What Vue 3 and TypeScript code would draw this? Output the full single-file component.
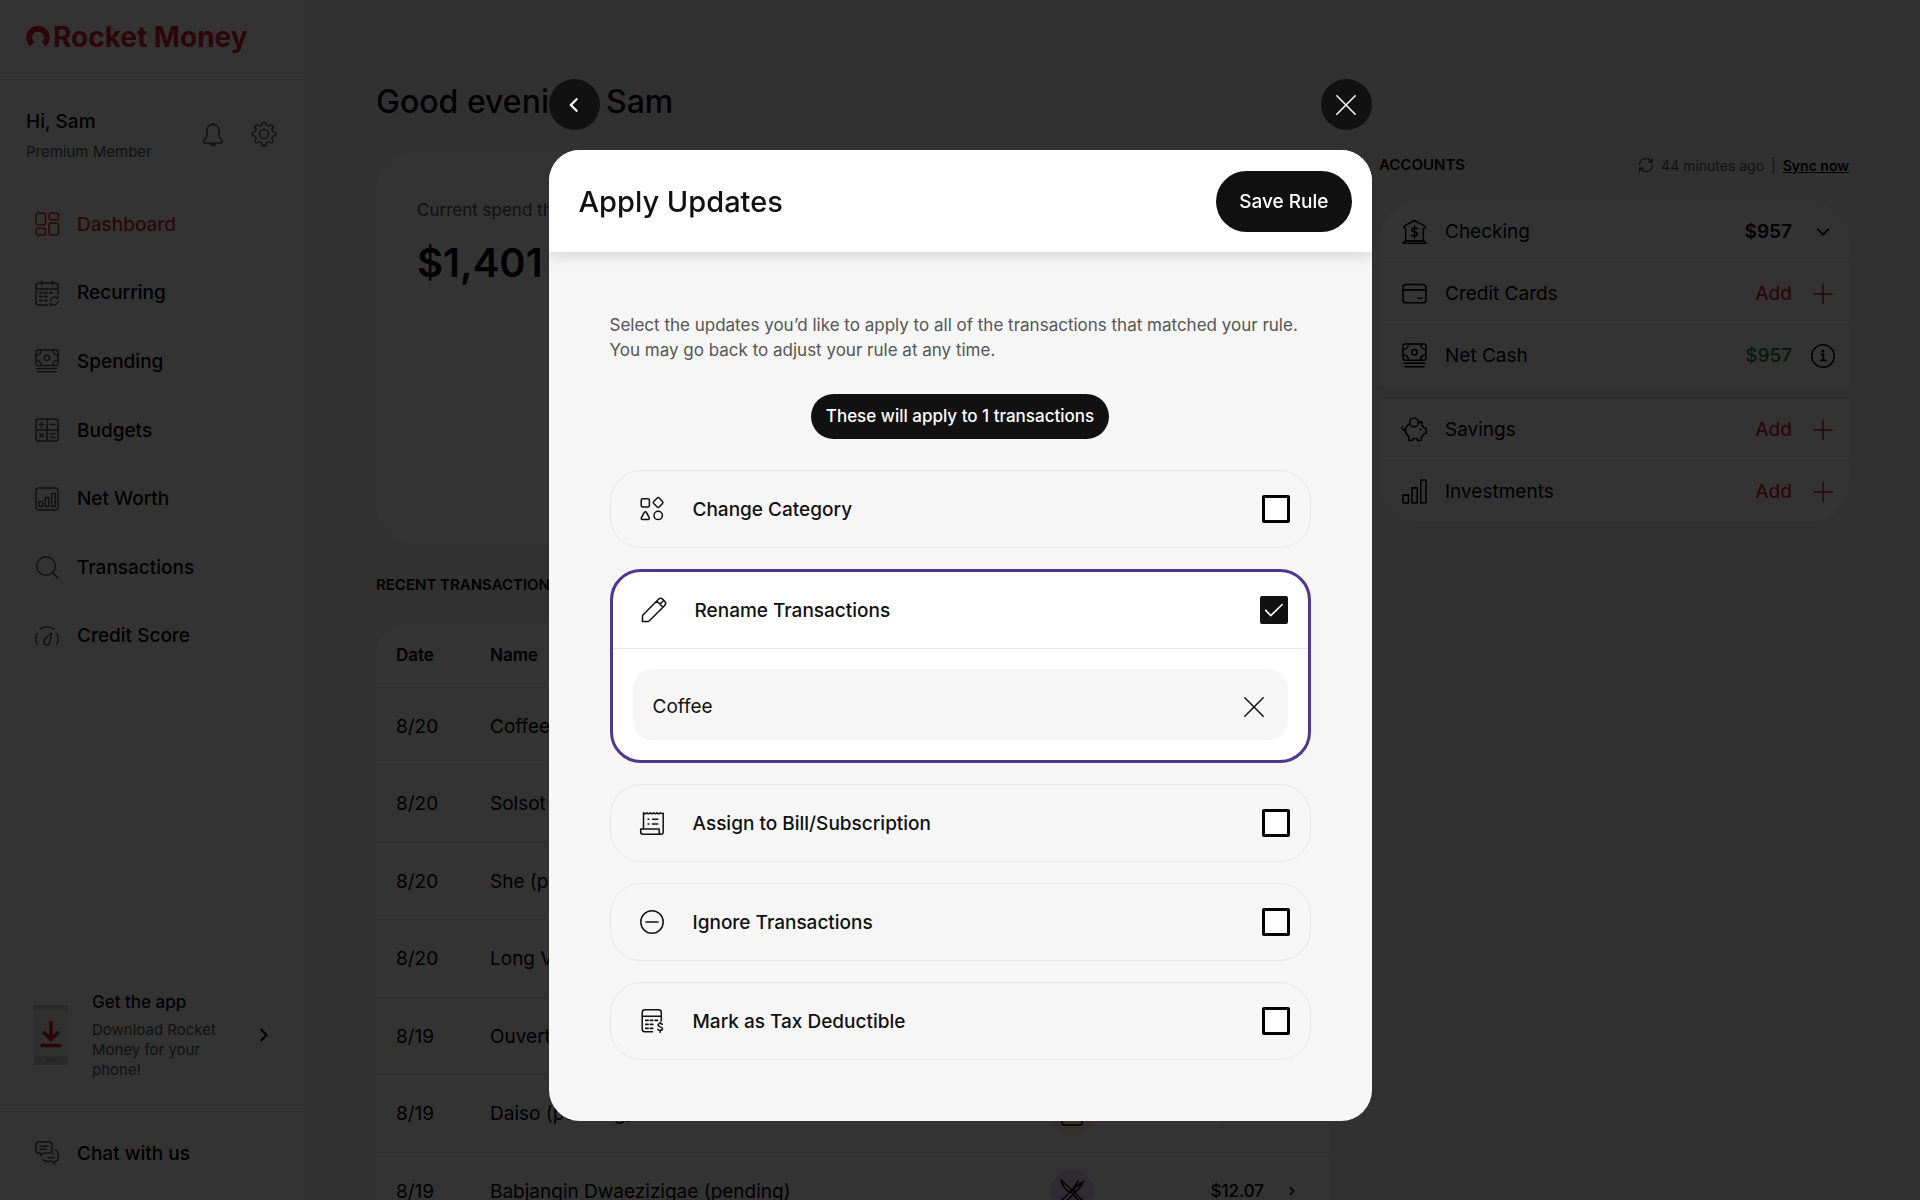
<script setup lang="ts">
import { ref } from 'vue'

interface NavItem { label: string; icon: string; active?: boolean }
interface Account { label: string; icon: string; value: string; kind: 'open' | 'add' | 'info' }
interface Transaction { date: string; name: string; amount: string; tone: string; icon: string }
interface RuleOption { id: string; label: string; icon: string; checked: boolean; field?: boolean }

function gearOutline(): string {
  const points: string[] = []
  for (let i = 0; i < 144; i++) {
    const a = (i / 144) * Math.PI * 2
    const r = 10.3 + 1.4 * Math.tanh(2.2 * Math.cos(8 * a))
    points.push(`${(12 + r * Math.cos(a)).toFixed(2)} ${(12 + r * Math.sin(a)).toFixed(2)}`)
  }
  return `M${points.join('L')}Z`
}

const banknote =
  '<rect x="1" y="1" width="22" height="15.5" rx="2"/><circle cx="12" cy="8.8" r="2.6"/><path d="M1 6.2A5 5 0 0 0 6.2 1M17.8 1A5 5 0 0 0 23 6.2M1 11.3a5 5 0 0 1 5.2 5.2M17.8 16.5a5 5 0 0 1 5.2-5.2M2 19.5h20M3 22.8h18"/>'

const icons: Record<string, string> = {
  bell: '<path d="M12 2.6C8 2.6 5.8 5.6 5.8 9.5v4.5c0 2-3.2 4-3.2 5.8 0 .7.5 1.1 1.2 1.1h16.4c.7 0 1.2-.4 1.2-1.1 0-1.8-3.2-3.8-3.2-5.8V9.5C18.2 5.6 16 2.6 12 2.6ZM10.3 2.6a1.8 1.8 0 0 1 3.4 0M9.8 21.2a2.2 2.2 0 0 0 4.4 0"/>',
  gear: `<path d="${gearOutline()}"/><circle cx="12" cy="12" r="4.6"/>`,
  dashboard: '<rect x="1" y="1" width="9.5" height="12" rx="2.3"/><rect x="14" y="1" width="9.5" height="6.8" rx="2.3"/><rect x="1" y="16.2" width="9.5" height="6.8" rx="2.3"/><rect x="14" y="11" width="9.5" height="12" rx="2.3"/>',
  recurring: '<path d="M12 24H4a3 3 0 0 1-3-3V5a3 3 0 0 1 3-3h16a3 3 0 0 1 3 3v8M1 8h22M6.5 0v4M17.5 0v4M15.5 19.5a4 4 0 0 1 7-2l.5-2M23 20.5a4 4 0 0 1-7 2l-.5 2"/><path d="M4.8 11.8h2M9.8 11.8h2M14.8 11.8h2M4.8 15.6h2M9.8 15.6h2M4.8 19.4h2M9.8 19.4h2" stroke-width="2"/>',
  spending: banknote,
  budgets: '<rect x="1" y="1" width="22" height="22" rx="2.5"/><path d="M12 1v22M1 12h22M4.2 6.6h4.6M6.5 4.3v4.6M15.2 6.6h4.8M4.8 15.6l3.4 3.4M8.2 15.6l-3.4 3.4M15.2 15.8h4.8M15.2 19.2h4.8"/>',
  networth: '<rect x="1" y="1" width="22" height="22" rx="2.5"/><path d="M4 14.5h3.6v5H4zM10.2 10.5h3.6v9h-3.6zM16.6 6.5h3.6v13h-3.6z"/>',
  search: '<circle cx="11" cy="11" r="9.3"/><path d="M17.6 17.6l5 5"/>',
  score: '<path d="M2.2 20A11.2 11.2 0 0 1 2.2 9.5M5 5.2a11.5 11.5 0 0 1 14 0M21.8 9.5a11.2 11.2 0 0 1 0 10.5M16.5 9c-4 3-7.8 6.5-7.8 9.2a3 3 0 0 0 5.9.5C15.2 16 16 13 16.5 9Z"/>',
  chat: '<path d="M3.8 1h10.4A2.8 2.8 0 0 1 17 3.8v5.4a2.8 2.8 0 0 1-2.8 2.8H8.5L5.5 15v-3H3.8A2.8 2.8 0 0 1 1 9.2V3.8A2.8 2.8 0 0 1 3.8 1ZM5 5h8M5 8.3h6M20 9.3c1.7 0 3 1 3 2.8v5.2c0 1.7-1.3 2.9-3 2.9h-.3V23l-3.2-2.8H10.5c-1.2 0-2.2-.8-2.6-2M18 13.2h1M13 16.7h6"/>',
  bank: '<path d="M2 8.5V6.8L12 1.5l10 5.3v1.7l-1.5.5v12h-17V9zM.8 23.2L3.2 21h17.6l2.4 2.2zM14.6 9.3c-.6-1-5.2-1.3-5.2 1.1 0 2.5 5.4 1.4 5.4 4.1 0 2.5-5 2.3-5.6.8M12 7v11.2"/>',
  card: '<rect x="1" y="3.3" width="22" height="17.6" rx="3"/><path d="M1 8.5h22M15.5 16.5h3.5"/>',
  cash: banknote,
  pig: '<circle cx="11.5" cy="5.2" r="4.2"/><path d="M7.6 6.8C4.5 8 3.3 10.3 3.3 13c0 2.6 1.2 4.3 3 5.7l.5 3.8h3.4l.5-1.8h3.8l.5 1.8h3.2l.6-3.6c1-.6 1.7-1.5 2.1-2.5l2.3-.9v-4.5l-2.3-.8c-.4-1.1-1.1-2-2-2.7l.3-3.3c-1.6.2-2.8 1-3.5 2M3.3 13C1 13.3 0 11 .3 9.3M17.8 11.5v.6"/>',
  bars: '<path d="M1 15.5h5.2v7.5H1zM9.6 8.5h5v14.5h-5zM18 1h5v22h-5z"/>',
  sync: '<path d="M2.3 12A9.7 9.7 0 0 1 20 6.6M21.7 12A9.7 9.7 0 0 1 4 17.4M21.5 2v5.5H16M2.5 22v-5.5H8"/>',
  plus: '<path d="M12 2.8v18.4M2.8 12h18.4"/>',
  chevronDown: '<path d="M6.8 9.4l5.2 5.2 5.2-5.2" stroke-width="2"/>',
  chevronRight: '<path d="M9.4 6.8l5.2 5.2-5.2 5.2" stroke-width="2.3"/>',
  info: '<circle cx="12" cy="12" r="11.2"/><path d="M10.3 10.3H12.3V16M9.8 16.4h5" stroke-width="1.8"/><circle cx="12" cy="7" r=".8" fill="currentColor"/>',
  close: '<path d="M2.8 2.8l18.4 18.4M21.2 2.8L2.8 21.2"/>',
  back: '<path d="M14.6 6.2L8.8 12l5.8 5.8" stroke-width="2.3"/>',
  shapes: '<rect x="1.2" y="1.8" width="8.2" height="8.2" rx="1.5"/><path d="M17.2.9a1.3 1.3 0 0 1 1.9 0l3.4 3.6a1.3 1.3 0 0 1 0 1.9l-3.4 3.6a1.3 1.3 0 0 1-1.9 0l-3.5-3.6a1.3 1.3 0 0 1 0-1.9zM4.3 15.3a1.2 1.2 0 0 1 2.1 0l2.8 5.4a1.1 1.1 0 0 1-1 1.7H2.4a1.1 1.1 0 0 1-1-1.7z"/><circle cx="18.2" cy="18.4" r="4.2"/>',
  pencil: '<path d="M.4 23.6l.2-5.6a2 2 0 0 1 .6-1.3L16.5 1.3a3 3 0 0 1 4.2 0l2 2a3 3 0 0 1 0 4.2L7.4 22.8a2 2 0 0 1-1.3.6zM14.8 3l6.2 6.2M17.9 6.1l3.3-3.1"/>',
  receipt: '<path d="M3.5 18V1.8c1 1.2 2.3 1.2 3.3 0 1 1.2 2.4 1.2 3.4 0 1 1.2 2.4 1.2 3.4 0 1 1.2 2.4 1.2 3.4 0 1 1.2 2.4 1.2 3.4 0 1 1 1.7 1.1 2.8.4V21a2.3 2.3 0 0 1-2.3 2.3H3a2.5 2.5 0 0 1-2.3-2.6V18h18.5v3c0 1.3.7 2.3 1.9 2.3M8 8.3h.9M12.5 8.3h5.3M8 13h.9M12.5 13h5.3"/>',
  minus: '<circle cx="12" cy="12" r="11.2"/><path d="M6 12h12"/>',
  tax: '<path d="M12.5 22.8H5A2.8 2.8 0 0 1 2.2 20V3.5A2.8 2.8 0 0 1 5 .8h13.5a2.8 2.8 0 0 1 2.8 2.7V12M2.2 7.3h19.1M22.3 15.3c-.7-.9-4.3-1.2-4.3.8 0 2.2 4.5 1.3 4.5 3.6 0 2.1-4 1.9-4.7.6M20.2 13.2v1M20.2 21.5v2"/><path d="M5.8 11.3h2.3M10.4 11.3h2.3M15.2 11.3h2.3M5.8 15.3h2.3M10.4 15.3h2.3M5.8 19.3h2.3M10.4 19.3h2.3" stroke-width="1.8"/>',
  bag: '<rect x="2" y="5" width="20" height="18" rx="2"/><path d="M7 9V5a5 5 0 0 1 10 0v4"/>',
  dining: '<path d="M1 1c1 5 4 9 8 12l3-2L1 1ZM12 11l11 11c-1 2-3 2-4 0l-8-9M1 22l12-12 3 3L4 24M13 10l5-8M22 6l-6 7M20 4l-5 5M24 2l-5 5"/>',
}

const nav: NavItem[] = [
  { label: 'Dashboard', icon: 'dashboard', active: true },
  { label: 'Recurring', icon: 'recurring' },
  { label: 'Spending', icon: 'spending' },
  { label: 'Budgets', icon: 'budgets' },
  { label: 'Net Worth', icon: 'networth' },
  { label: 'Transactions', icon: 'search' },
  { label: 'Credit Score', icon: 'score' },
]

const accountGroups: Account[][] = [
  [
    { label: 'Checking', icon: 'bank', value: '$957', kind: 'open' },
    { label: 'Credit Cards', icon: 'card', value: 'Add', kind: 'add' },
    { label: 'Net Cash', icon: 'cash', value: '$957', kind: 'info' },
  ],
  [
    { label: 'Savings', icon: 'pig', value: 'Add', kind: 'add' },
    { label: 'Investments', icon: 'bars', value: 'Add', kind: 'add' },
  ],
]
const trailing = { open: 'chevronDown', add: 'plus', info: 'info' }

const transactions: Transaction[] = [
  { date: '8/20', name: 'Coffee', amount: '$5.50', tone: 'lilac', icon: 'dining' },
  { date: '8/20', name: 'Solsot', amount: '$9.20', tone: 'lilac', icon: 'dining' },
  { date: '8/20', name: 'She (pending)', amount: '$8.75', tone: 'sand', icon: 'bag' },
  { date: '8/20', name: 'Long V', amount: '$7.30', tone: 'lilac', icon: 'dining' },
  { date: '8/19', name: 'Ouvert', amount: '$6.10', tone: 'lilac', icon: 'dining' },
  { date: '8/19', name: 'Daiso (pending)', amount: '$3.76', tone: 'sand', icon: 'bag' },
  { date: '8/19', name: 'Babjangin Dwaezizigae (pending)', amount: '$12.07', tone: 'lilac', icon: 'dining' },
]

const options = ref<RuleOption[]>([
  { id: 'category', label: 'Change Category', icon: 'shapes', checked: false },
  { id: 'rename', label: 'Rename Transactions', icon: 'pencil', checked: true, field: true },
  { id: 'bill', label: 'Assign to Bill/Subscription', icon: 'receipt', checked: false },
  { id: 'ignore', label: 'Ignore Transactions', icon: 'minus', checked: false },
  { id: 'tax', label: 'Mark as Tax Deductible', icon: 'tax', checked: false },
])
const newName = ref('Coffee')
</script>

<template>
  <div class="app">
    <aside class="sidebar">
      <div class="brand">
        <svg class="brand-mark" viewBox="0 0 24 24" aria-hidden="true">
          <path d="M6.2 19.2A8.8 8.8 0 1 1 17.8 19.2" />
        </svg>
        <span class="brand-name">Rocket Money</span>
      </div>

      <div class="user">
        <div class="user-text">
          <div class="user-name">Hi, Sam</div>
          <div class="user-plan">Premium Member</div>
        </div>
        <button class="plain" type="button" aria-label="Notifications">
          <svg class="icon" viewBox="0 0 24 24" v-html="icons.bell"></svg>
        </button>
        <button class="plain" type="button" aria-label="Settings">
          <svg class="icon" viewBox="0 0 24 24" v-html="icons.gear"></svg>
        </button>
      </div>

      <nav class="nav">
        <a v-for="item in nav" :key="item.label" href="#" class="nav-link" :class="{ active: item.active }">
          <svg class="icon" viewBox="0 0 24 24" v-html="icons[item.icon]"></svg>
          <span>{{ item.label }}</span>
        </a>
      </nav>

      <a href="#" class="get-app">
        <svg class="phone" viewBox="0 0 34 60" aria-hidden="true">
          <rect width="34" height="60" fill="#f0f0f0" />
          <rect width="34" height="5" fill="#d2d2d2" />
          <rect y="51" width="34" height="9" fill="#d2d2d2" />
          <rect x="11" y="53" width="12" height="4" rx="2" fill="#b8b8b8" />
          <path d="M17 16v18M9.5 27l7.5 7.5 7.5-7.5M6.5 40.5h21" fill="none" stroke="#de1f3e" stroke-width="3.6" />
        </svg>
        <span class="get-app-text">
          <strong>Get the app</strong>
          <span>Download Rocket Money for your phone!</span>
        </span>
        <svg class="icon" viewBox="0 0 24 24" v-html="icons.chevronRight"></svg>
      </a>

      <a href="#" class="chat">
        <svg class="icon" viewBox="0 0 24 24" v-html="icons.chat"></svg>
        <span>Chat with us</span>
      </a>
    </aside>

    <main class="main">
      <h1>Good evening, Sam</h1>
      <div class="columns">
        <div class="left">
          <section class="spend card">
            <div class="spend-label">Current spend this month</div>
            <div class="spend-value">$1,401</div>
          </section>
          <h2 class="recent-title">RECENT TRANSACTIONS</h2>
          <div class="card table-card">
            <table>
              <thead>
                <tr>
                  <th class="col-date">Date</th>
                  <th>Name</th>
                  <th class="col-cat">Category</th>
                  <th class="col-amount">Amount</th>
                  <th class="col-more"></th>
                </tr>
              </thead>
              <tbody>
                <tr v-for="(t, i) in transactions" :key="i">
                  <td class="col-date">{{ t.date }}</td>
                  <td>{{ t.name }}</td>
                  <td class="col-cat">
                    <span class="badge" :class="t.tone">
                      <svg class="icon" viewBox="0 0 24 24" v-html="icons[t.icon]"></svg>
                    </span>
                  </td>
                  <td class="col-amount">{{ t.amount }}</td>
                  <td class="col-more">
                    <svg class="icon small" viewBox="0 0 24 24" v-html="icons.chevronRight"></svg>
                  </td>
                </tr>
              </tbody>
            </table>
          </div>
        </div>

        <section class="accounts">
          <div class="accounts-head">
            <h2>ACCOUNTS</h2>
            <span class="sync">
              <svg class="icon sync-icon" viewBox="0 0 24 24" v-html="icons.sync"></svg>
              <span>44 minutes ago</span>
              <span>|</span>
              <a href="#">Sync now</a>
            </span>
          </div>
          <div class="groups">
            <ul v-for="(group, g) in accountGroups" :key="g" class="group">
              <li v-for="a in group" :key="a.label" :class="a.kind">
                <svg class="icon lead" viewBox="0 0 24 24" v-html="icons[a.icon]"></svg>
                <span class="account-name">{{ a.label }}</span>
                <span class="account-value">{{ a.value }}</span>
                <svg class="icon" viewBox="0 0 24 24" v-html="icons[trailing[a.kind]]"></svg>
              </li>
            </ul>
          </div>
        </section>
      </div>
    </main>

    <div class="overlay">
      <div class="dialog-wrap">
        <div class="dialog-nav">
          <button type="button" class="round" aria-label="Back">
            <svg class="icon" viewBox="0 0 24 24" v-html="icons.back"></svg>
          </button>
          <button type="button" class="round" aria-label="Close">
            <svg class="icon" viewBox="0 0 24 24" v-html="icons.close"></svg>
          </button>
        </div>
        <div class="dialog" role="dialog" aria-modal="true" aria-labelledby="dialog-title">
          <header class="dialog-head">
            <h2 id="dialog-title">Apply Updates</h2>
            <button type="button" class="save">Save Rule</button>
          </header>
          <div class="dialog-body">
            <p class="intro">
              Select the updates you’d like to apply to all of the transactions that matched your rule.<br />
              You may go back to adjust your rule at any time.
            </p>
            <div class="pill">These will apply to 1 transactions</div>
            <div class="options">
              <div v-for="o in options" :key="o.id" class="option" :class="{ selected: o.checked }">
                <label class="option-row" :for="o.id">
                  <svg class="icon" viewBox="0 0 24 24" v-html="icons[o.icon]"></svg>
                  <span>{{ o.label }}</span>
                  <input :id="o.id" v-model="o.checked" type="checkbox" />
                </label>
                <div v-if="o.field && o.checked" class="option-body">
                  <div class="field">
                    <input v-model="newName" type="text" aria-label="New name" />
                    <button type="button" class="plain" aria-label="Clear name" @click="newName = ''">
                      <svg class="icon" viewBox="0 0 24 24" v-html="icons.close"></svg>
                    </button>
                  </div>
                </div>
              </div>
            </div>
          </div>
        </div>
      </div>
    </div>
  </div>
</template>

<style>
body {
  margin: 0;
}
</style>

<style scoped>
* {
  box-sizing: border-box;
}
.app {
  display: flex;
  height: 100vh;
  overflow: hidden;
  background: #f6f6f6;
  color: #000;
  font-family: Inter, 'Liberation Sans', sans-serif;
  font-size: 19px;
}
h1,
h2,
p,
ul {
  margin: 0;
  padding: 0;
  font-weight: 500;
}
a {
  color: inherit;
  text-decoration: none;
}
button {
  border: 0;
  font: inherit;
  cursor: pointer;
}
.plain {
  display: flex;
  padding: 0;
  background: none;
  color: inherit;
}
.icon {
  width: 24px;
  height: 24px;
  flex: none;
  overflow: visible;
  fill: none;
  stroke: currentColor;
  stroke-width: 1.5;
  stroke-linecap: round;
  stroke-linejoin: round;
}

/* Sidebar */
.sidebar {
  display: flex;
  flex-direction: column;
  width: 304px;
  flex: none;
  background: #fff;
  font-weight: 500;
}
.brand {
  display: flex;
  align-items: center;
  gap: 3px;
  height: 80px;
  padding: 0 26px 6px;
  border-bottom: 1px solid #dcdcdc;
  color: #de1f3e;
}
.brand-mark {
  width: 24px;
  height: 24px;
  fill: none;
  stroke: currentColor;
  stroke-width: 6;
}
.brand-name {
  font-size: 28px;
  font-weight: 700;
  white-space: nowrap;
}
.user {
  display: flex;
  align-items: center;
  gap: 27px;
  height: 110px;
  padding: 0 28px 3px 26px;
  color: #555;
}
.user-text {
  flex: 1;
  padding-top: 4px;
}
.user-name {
  color: #000;
  line-height: 26px;
}
.user-plan {
  margin-top: 7px;
  font-size: 15px;
  font-weight: 400;
  line-height: 20px;
}
.nav {
  display: flex;
  flex-direction: column;
  height: 480px;
}
.nav-link {
  display: flex;
  flex: 1;
  align-items: center;
  gap: 18px;
  padding-left: 35px;
}
.nav-link .icon,
.chat .icon {
  color: #555;
}
.nav-link.active,
.nav-link.active .icon {
  color: #de1f3e;
}
.get-app {
  display: flex;
  align-items: center;
  gap: 24px;
  margin-top: auto;
  padding: 0 28px 31px 34px;
}
.phone {
  width: 34px;
  height: 60px;
  flex: none;
}
.get-app-text {
  flex: 1;
  color: #555;
  font-size: 15px;
  font-weight: 400;
  line-height: 20px;
}
.get-app-text strong {
  display: block;
  margin-bottom: 6px;
  color: #000;
  font-size: 17px;
  font-weight: 500;
  line-height: 24px;
}
.chat {
  display: flex;
  align-items: center;
  gap: 18px;
  height: 89px;
  padding: 0 35px 6px;
  border-top: 1px solid #dcdcdc;
}

/* Dashboard */
.main {
  flex: 1;
  min-width: 0;
  padding: 80px 71px 0 72px;
}
h1 {
  margin-bottom: 27px;
  font-size: 32px;
  line-height: 44px;
}
.columns {
  display: flex;
  align-items: flex-start;
  gap: 50px;
}
.left {
  flex: 1;
  min-width: 0;
}
.card {
  border-radius: 40px;
  background: #fcfcfc;
}
.spend {
  height: 394px;
  padding: 47px 41px;
}
.spend-label {
  color: #555;
  font-size: 17px;
  line-height: 24px;
}
.spend-value {
  margin-top: 11px;
  font-size: 40px;
  font-weight: 600;
  line-height: 60px;
}
.recent-title,
.accounts-head h2 {
  font-size: 15px;
  font-weight: 600;
  line-height: 20px;
}
.recent-title {
  margin: 30px 0 27px;
}
.table-card {
  border-radius: 32px 32px 0 0;
}
table {
  width: 100%;
  border-spacing: 0;
  table-layout: fixed;
}
th,
td {
  padding: 0;
  height: 77px;
  border-bottom: 1px solid #e8e8e8;
  text-align: left;
  font-weight: 400;
}
tr:nth-child(even) td {
  height: 78px;
}
th {
  height: 66px;
  font-size: 17px;
  font-weight: 600;
}
.col-date {
  width: 114px;
  padding-left: 20px;
}
.col-cat {
  width: 132px;
  text-align: center;
}
.col-amount {
  width: 126px;
  font-size: 17px;
  font-weight: 500;
  text-align: right;
}
.col-more {
  width: 65px;
  padding-left: 20px;
}
.icon.small {
  display: block;
  width: 16px;
  height: 16px;
  stroke-width: 2;
}
.badge {
  display: inline-flex;
  align-items: center;
  justify-content: center;
  width: 44px;
  height: 44px;
  border-radius: 50%;
  vertical-align: middle;
}
.badge.lilac {
  background: #e6dcfa;
}
.badge.sand {
  background: #faf0d2;
}

/* Accounts */
.accounts {
  width: 470px;
  flex: none;
}
.accounts-head {
  display: flex;
  align-items: center;
  justify-content: space-between;
  height: 28px;
  margin-bottom: 22px;
}
.sync {
  display: flex;
  align-items: center;
  gap: 7px;
  color: #555;
  font-size: 14px;
}
.sync a {
  color: #000;
  font-weight: 600;
  text-decoration: underline;
}
.sync-icon {
  width: 16px;
  height: 16px;
  stroke-width: 2;
}
.groups {
  overflow: hidden;
  border-radius: 40px;
  background: #f0f0f0;
}
.group {
  background: #fcfcfc;
  list-style: none;
}
.group + .group {
  margin-top: 12px;
}
.group li {
  display: flex;
  align-items: center;
  height: 62px;
  padding: 0 14px 0 23px;
  border-bottom: 1px solid #e8e8e8;
  font-weight: 400;
}
.group .lead {
  width: 25px;
  height: 25px;
  margin-right: 18px;
}
.account-name {
  flex: 1;
}
.account-value {
  margin-right: 19px;
  font-weight: 500;
}
.add .account-value,
.add .account-value + .icon {
  color: #de1f3e;
}
.open .account-value {
  font-weight: 600;
}
.info .account-value {
  color: #17804a;
}

/* Dialog */
.overlay {
  position: fixed;
  inset: 0;
  display: flex;
  align-items: center;
  justify-content: center;
  background: rgba(0, 0, 0, 0.8);
  color: #111;
  font-weight: 500;
}
.dialog-wrap {
  width: 823px;
}
.dialog-nav {
  display: flex;
  justify-content: space-between;
  margin-bottom: 20px;
}
.round {
  display: flex;
  align-items: center;
  justify-content: center;
  width: 51px;
  height: 51px;
  padding: 0;
  border-radius: 50%;
  background: #111;
  color: #fff;
}
.dialog {
  overflow: hidden;
  border-radius: 31px;
  background: #f6f6f6;
}
.dialog-head {
  position: relative;
  display: flex;
  align-items: center;
  justify-content: space-between;
  height: 102px;
  padding: 0 20px 0 30px;
  background: #fff;
  box-shadow: 0 6px 12px rgba(0, 0, 0, 0.1);
}
.dialog-head h2 {
  font-size: 29px;
}
.save {
  height: 61px;
  padding: 0 23px;
  border-radius: 31px;
  background: #111;
  color: #fff;
}
.dialog-body {
  display: flex;
  flex-direction: column;
  align-items: center;
  padding: 61px;
}
.intro {
  align-self: stretch;
  color: #555;
  font-size: 17px;
  font-weight: 400;
  line-height: 25px;
  white-space: nowrap;
}
.pill {
  margin: 31px 0;
  padding: 0 15px;
  border-radius: 23px;
  background: #111;
  color: #fff;
  font-size: 17px;
  line-height: 45px;
}
.options {
  display: flex;
  flex-direction: column;
  align-self: stretch;
  gap: 21px;
}
.option {
  border: 1px solid #e6e6e6;
  border-radius: 31px;
}
.option.selected {
  border: 3px solid #50368c;
  background: #fff;
}
.option-row {
  display: flex;
  align-items: center;
  gap: 29px;
  height: 76px;
  padding: 0 20px 0 29px;
}
.option-row span {
  flex: 1;
}
.option-row input {
  appearance: none;
  width: 28px;
  height: 28px;
  margin: 0;
  border: 3px solid #000;
  border-radius: 2px;
  background: #fff;
}
.option-row input:checked {
  border-color: #111;
  background: #111 url("data:image/svg+xml,%3Csvg xmlns='http://www.w3.org/2000/svg' viewBox='0 0 24 24' fill='none' stroke='white' stroke-width='1.8' stroke-linecap='round'%3E%3Cpath d='M3 12.5l5.5 5.5L21 6'/%3E%3C/svg%3E") center / 22px no-repeat;
}
.option-body {
  padding: 20px;
  border-top: 1px solid #e6e6e6;
}
.field {
  display: flex;
  align-items: center;
  height: 71px;
  padding: 4px 22px 0 20px;
  border-radius: 20px;
  background: #f6f6f6;
}
.field input {
  flex: 1;
  min-width: 0;
  padding: 0;
  border: 0;
  outline: 0;
  background: none;
  color: #111;
  font: inherit;
  font-weight: 400;
}
</style>
